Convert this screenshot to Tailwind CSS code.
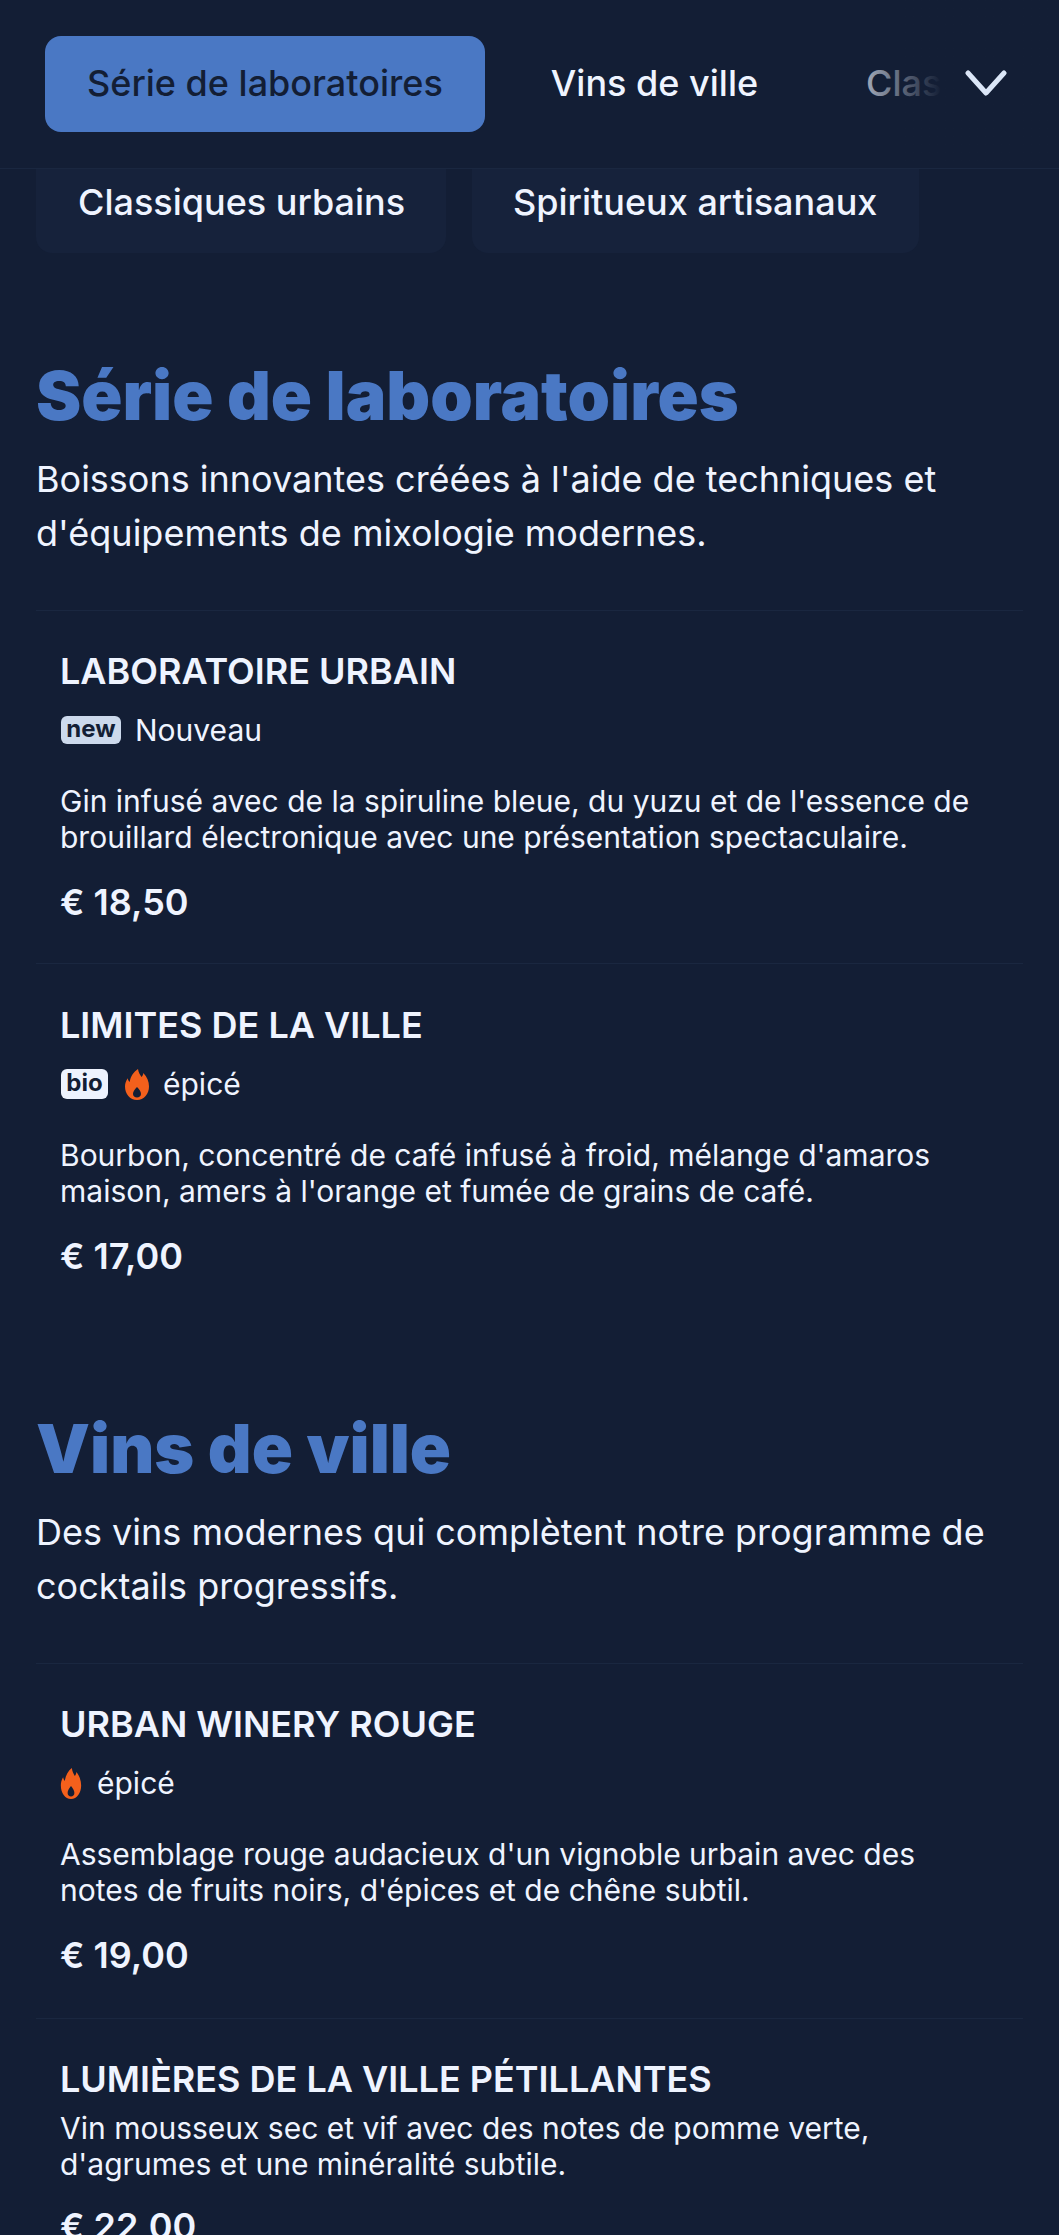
<!DOCTYPE html>
<html lang="fr">
<head>
  <meta charset="UTF-8" />
  <title>Menu</title>
  <script src="https://cdn.jsdelivr.net/npm/@tailwindcss/browser@4"></script>
</head>
<body class="bg-[#131e35] font-['Inter',sans-serif] text-[#eff4ff] h-[2235px] overflow-hidden">

  <!-- sticky nav -->
  <header class="relative h-[169px] border-b border-[#1a2740] overflow-hidden">
    <nav class="flex gap-6 pl-[45px] pt-9 whitespace-nowrap">
      <a class="h-[96px] px-[42px] flex items-center rounded-2xl bg-[#4a78c4] text-[#131e35] text-[36px] font-medium pb-[2px]">Série de laboratoires</a>
      <a class="h-[96px] px-[42px] flex items-center text-[36px] font-medium pb-[2px]">Vins de ville</a>
      <a class="h-[96px] px-[42px] flex items-center text-[36px] font-medium pb-[2px]">Classiques urbains</a>
    </nav>
    <div class="absolute top-0 right-0 h-full w-[235px] flex items-center justify-end pr-[52px] pb-[3px] bg-gradient-to-r from-transparent via-[#131e35] via-50% to-[#131e35]">
      <svg class="w-[42px] h-[26px]" viewBox="0 0 42 26" fill="none" stroke="#dbe6f7" stroke-width="5" stroke-linecap="round" stroke-linejoin="round"><path d="M3 3 L21 23 L39 3"/></svg>
    </div>
  </header>

  <div class="flex gap-[26px] pl-[36px] h-[84px] whitespace-nowrap">
    <a class="w-[410px] pl-[42px] rounded-b-2xl bg-[#16223b] text-[36px] font-medium leading-[66px]">Classiques urbains</a>
    <a class="w-[447px] pl-[41px] rounded-b-2xl bg-[#16223b] text-[36px] font-medium leading-[66px]">Spiritueux artisanaux</a>
  </div>

  <main class="px-[36px]">
    <section class="pt-[100px]">
      <h2 class="text-[#4a78c4] text-[68px] font-black leading-[84px]">Série de laboratoires</h2>
      <p class="mt-[15px] text-[36px] leading-[54px]">Boissons innovantes créées à l'aide de techniques et d'équipements de mixologie modernes.</p>
      <div class="mt-[50px]">
        <article class="border-t border-[#1a2740] h-[353px] px-6 pt-[37px]">
          <h3 class="text-[36px] font-semibold leading-[46px]">LABORATOIRE URBAIN</h3>
          <div class="mt-[14px] h-[44px] flex items-center text-[30px]">
            <span class="h-[28px] w-[60px] ml-px mr-[14px] rounded-md bg-[#ccd9ec] text-[#131e35] text-[24px] font-bold leading-[25px] text-center">new</span>Nouveau
          </div>
          <p class="mt-[31px] text-[30px] leading-[36px]">Gin infusé avec de la spiruline bleue, du yuzu et de l'essence de brouillard électronique avec une présentation spectaculaire.</p>
          <p class="mt-[24px] text-[36px] font-semibold leading-[46px]">€ 18,50</p>
        </article>
        <article class="border-t border-[#1a2740] h-[353px] px-6 pt-[38px]">
          <h3 class="text-[36px] font-semibold leading-[46px]">LIMITES DE LA VILLE</h3>
          <div class="mt-[14px] h-[44px] flex items-center text-[30px]">
            <span class="h-[30px] w-[47px] ml-px mr-[16px] rounded-md bg-[#eef3fe] text-[#131e35] text-[24px] font-bold leading-[28px] text-center">bio</span>
            <svg class="w-[26px] h-[31px] mr-[13px]" viewBox="0 0 26 31"><path fill="#f4601c" fill-rule="evenodd" d="M14 0c.5 3.500 2 5.500 3.500 8 1-.8 1.700-2.200 1.800-4 3.700 3.800 5.700 8.500 5.700 13.500C25 25 20 31 13 31S1 25 1 17.500c0-3 1-5.800 2.700-8.300.3 1.600 1 2.900 2 3.700C6.500 7.500 9.500 3 14 0zm-1 18c-2.300 2.300-4 4.500-4 7 0 2 1.800 3.500 4 3.500s4-1.500 4-3.500c0-2.500-1.700-4.700-4-7z"/></svg>épicé
          </div>
          <p class="mt-[31px] text-[30px] leading-[36px]">Bourbon, concentré de café infusé à froid, mélange d'amaros maison, amers à l'orange et fumée de grains de café.</p>
          <p class="mt-[24px] text-[36px] font-semibold leading-[46px]">€ 17,00</p>
        </article>
      </div>
    </section>

    <section class="pt-[90px]">
      <h2 class="text-[#4a78c4] text-[68px] font-black leading-[84px]">Vins de ville</h2>
      <p class="mt-[15px] text-[36px] leading-[54px]">Des vins modernes qui complètent notre programme de cocktails progressifs.</p>
      <div class="mt-[50px]">
        <article class="border-t border-[#1a2740] h-[355px] px-6 pt-[37px]">
          <h3 class="text-[36px] font-semibold leading-[46px]">URBAN WINERY ROUGE</h3>
          <div class="mt-[14px] h-[44px] flex items-center text-[30px]">
            <svg class="w-[22px] h-[31px] mr-[15px]" viewBox="0 0 26 31" preserveAspectRatio="none"><path fill="#f4601c" fill-rule="evenodd" d="M14 0c.5 3.500 2 5.500 3.500 8 1-.8 1.700-2.200 1.800-4 3.700 3.800 5.700 8.500 5.700 13.500C25 25 20 31 13 31S1 25 1 17.500c0-3 1-5.800 2.700-8.300.3 1.600 1 2.900 2 3.700C6.500 7.500 9.500 3 14 0zm-1 18c-2.300 2.300-4 4.500-4 7 0 2 1.800 3.500 4 3.500s4-1.500 4-3.500c0-2.500-1.700-4.700-4-7z"/></svg>épicé
          </div>
          <p class="mt-[31px] text-[30px] leading-[36px]">Assemblage rouge audacieux d'un vignoble urbain avec des notes de fruits noirs, d'épices et de chêne subtil.</p>
          <p class="mt-[24px] text-[36px] font-semibold leading-[46px]">€ 19,00</p>
        </article>
        <article class="border-t border-[#1a2740] px-6 pt-[37px]">
          <h3 class="text-[36px] font-semibold leading-[46px]">LUMIÈRES DE LA VILLE PÉTILLANTES</h3>
          <p class="mt-[8px] text-[30px] leading-[36px]">Vin mousseux sec et vif avec des notes de pomme verte, d'agrumes et une minéralité subtile.</p>
          <p class="mt-[21px] text-[36px] font-semibold leading-[46px]">€ 22,00</p>
        </article>
      </div>
    </section>
  </main>
</body>
</html>
